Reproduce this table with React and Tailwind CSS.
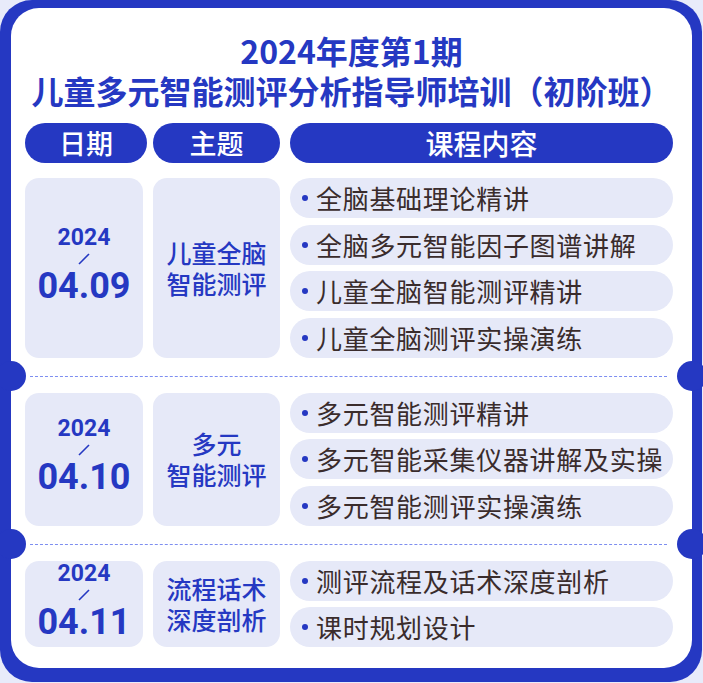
const BLUE = "text-[#2538c2]";

const rows = [
  {
    date: "04.09",
    topic: ["儿童全脑", "智能测评"],
    items: ["全脑基础理论精讲", "全脑多元智能因子图谱讲解", "儿童全脑智能测评精讲", "儿童全脑测评实操演练"],
  },
  {
    date: "04.10",
    topic: ["多元", "智能测评"],
    items: ["多元智能测评精讲", "多元智能采集仪器讲解及实操", "多元智能测评实操演练"],
  },
  {
    date: "04.11",
    topic: ["流程话术", "深度剖析"],
    items: ["测评流程及话术深度剖析", "课时规划设计"],
  },
];

const Separator = () => (
  <div className="relative mt-[18px] mb-[16px]">
    <div className="ml-[19px] mr-[25px] border-t border-dashed border-[#7d8ef0]" />
    <div className="absolute left-[-15px] top-1/2 -translate-y-1/2 w-[30px] h-[30px] rounded-full bg-[#2538c2]" />
    <div className="absolute right-[-15px] top-1/2 -translate-y-1/2 w-[30px] h-[30px] rounded-full bg-[#2538c2]" />
  </div>
);

const Row = ({ row }) => (
  <div className="flex pl-[14px] pr-[19px]">
    <div className="w-[118px] shrink-0 rounded-[14px] bg-[#e6e9f8] flex flex-col items-center justify-center pb-[6px]">
      <span className={`font-['Roboto'] font-bold text-[23px] leading-[24px] ${BLUE}`}>2024</span>
      <svg width="12" height="12" viewBox="0 0 12 12" className="my-[3px]">
        <line x1="1" y1="11" x2="11" y2="1" stroke="#2538c2" strokeWidth="1.6" />
      </svg>
      <span className={`font-['Roboto'] font-bold text-[36px] leading-[36px] ${BLUE}`}>{row.date}</span>
    </div>
    <div className="w-[127px] shrink-0 ml-[10px] rounded-[14px] bg-[#e6e9f8] flex flex-col items-center justify-center gap-[2px]">
      {row.topic.map((t) => (
        <div key={t} className={`text-[25px] leading-[29px] font-medium ${BLUE}`}>{t}</div>
      ))}
    </div>
    <div className="flex-1 ml-[10px] flex flex-col gap-[6.5px]">
      {row.items.map((it) => (
        <div key={it} className="h-[40px] rounded-full bg-[#e6e9f8] flex items-center pl-[12px]">
          <span className="w-[6px] h-[6px] rounded-full bg-[#2538c2] shrink-0" />
          <span className="ml-[8px] text-[26px] leading-none tracking-[0.7px] text-[#3a2c2c]">{it}</span>
        </div>
      ))}
    </div>
  </div>
);

export default function App() {
  return (
    <div className="w-[703px] h-[683px] bg-[#e8ebfa] font-['Noto_Sans_CJK_SC','Noto_Sans',sans-serif]">
      <div className="w-[702px] h-[682px] rounded-[32px] bg-[#2538c2] pt-[8px] pl-[11px] pr-[10px] pb-[14px]">
        <div className="h-full rounded-[28px] bg-white flex flex-col">
          <div className={`pt-[22px] text-center text-[32px] leading-[40px] font-bold ${BLUE}`}>
            <div>2024年度第1期</div>
            <div>儿童多元智能测评分析指导师培训（初阶班）</div>
          </div>
          <div className="mt-[13px] flex pl-[14px] pr-[19px] text-white text-[27px] font-medium">
            <div className="w-[122px] h-[40px] rounded-full bg-[#2538c2] flex items-center justify-center">日期</div>
            <div className="w-[127px] h-[40px] ml-[6px] rounded-full bg-[#2538c2] flex items-center justify-center">主题</div>
            <div className="flex-1 h-[40px] ml-[10px] rounded-full bg-[#2538c2] flex items-center justify-center text-[28px]">课程内容</div>
          </div>
          <div className="mt-[15px]">
            <Row row={rows[0]} />
            <Separator />
            <Row row={rows[1]} />
            <Separator />
            <Row row={rows[2]} />
          </div>
        </div>
      </div>
    </div>
  );
}
